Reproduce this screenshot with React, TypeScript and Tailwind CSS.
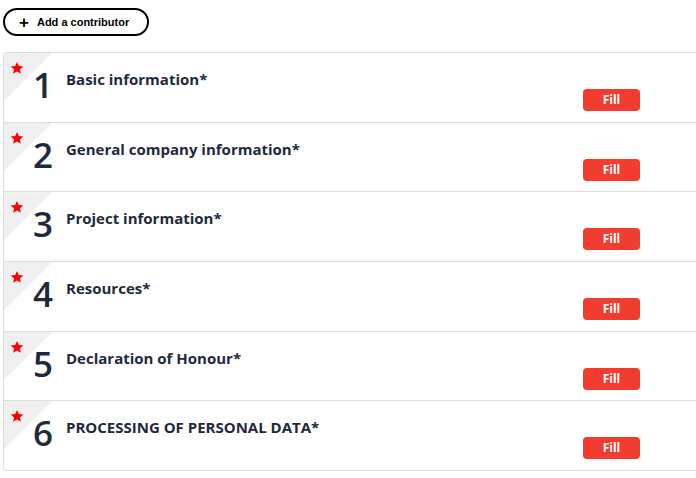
import React from "react";

const sections = [
  "Basic information*",
  "General company information*",
  "Project information*",
  "Resources*",
  "Declaration of Honour*",
  "PROCESSING OF PERSONAL DATA*",
];

function Star() {
  return (
    <svg width="14" height="14" viewBox="0 0 24 24" className="absolute left-[6px] top-[8px]">
      <path
        d="M12 1.5l3.1 7.2 7.7.6-5.9 5.1 1.8 7.6L12 17.9 5.3 22l1.8-7.6L1.2 9.3l7.7-.6z"
        fill="#ff0000"
      />
    </svg>
  );
}

function SectionRow({ index, title }: { index: number; title: string }) {
  return (
    <div className="relative flex h-[69.67px] border-t border-[#dedede] first:h-[68.67px] first:border-t-0">
      <div className="absolute left-0 top-0 h-[48px] w-[48px] bg-[#f0eff0] [clip-path:polygon(0_0,100%_0,0_100%)]" />
      <Star />
      <div className="relative w-[62px] shrink-0 pl-[29px] pt-[10px] text-[35px] font-semibold leading-[44px] text-[#1e2a3b]">
        {index}
      </div>
      <div className="relative flex-1 pt-[16px]">
        <div className="text-[15px] font-bold leading-5 text-[#1e2a3b]">{title}</div>
      </div>
      <div className="absolute left-[579px] top-[36px] flex h-[22px] w-[57px] items-center justify-center rounded-[4px] bg-[#f33c30] text-[12px] font-bold text-white">
        Fill
      </div>
    </div>
  );
}

export default function App() {
  return (
    <div
      className="h-[478px] w-[696px] overflow-hidden bg-white"
      style={{ fontFamily: '"Open Sans", "Noto Sans", sans-serif' }}
    >
      <div className="pl-[3px] pt-[8px]">
        <button
          className="flex h-[28px] w-[146px] items-center gap-[8px] rounded-full border-2 border-black pl-[14px] text-[11px] font-bold text-black"
          style={{ fontFamily: '"Liberation Sans", Arial, sans-serif' }}
        >
          <span className="text-[17px] font-bold leading-none">+</span>
          <span>Add a contributor</span>
        </button>
      </div>
      <div className="ml-[3px] mt-[16px] w-[720px] overflow-hidden rounded-[3px] border border-[#dedede]">
        {sections.map((title, i) => (
          <SectionRow key={title} index={i + 1} title={title} />
        ))}
      </div>
    </div>
  );
}
